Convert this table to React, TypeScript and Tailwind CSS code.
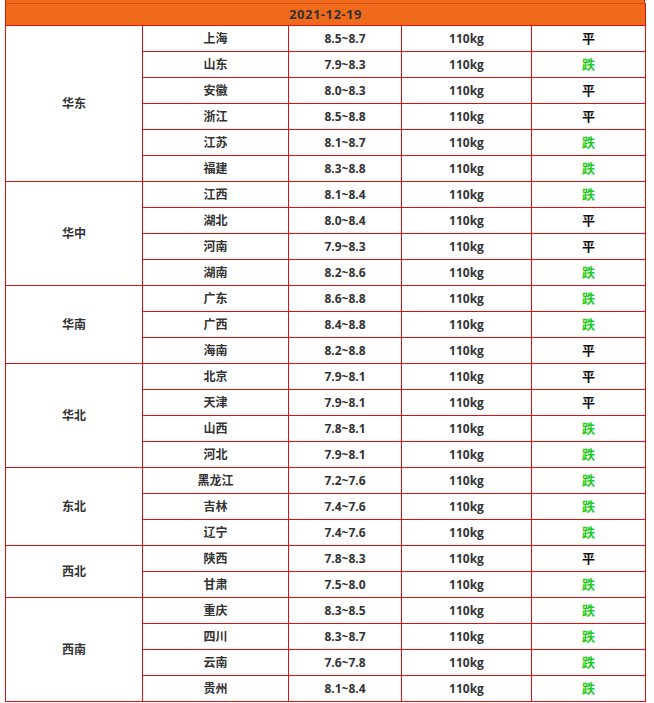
import React from "react";

type Row = { p: string; r: string; t: "平" | "跌" };
const groups: { name: string; rows: Row[] }[] = [
  { name: "华东", rows: [
    { p: "上海", r: "8.5~8.7", t: "平" },
    { p: "山东", r: "7.9~8.3", t: "跌" },
    { p: "安徽", r: "8.0~8.3", t: "平" },
    { p: "浙江", r: "8.5~8.8", t: "平" },
    { p: "江苏", r: "8.1~8.7", t: "跌" },
    { p: "福建", r: "8.3~8.8", t: "跌" },
  ] },
  { name: "华中", rows: [
    { p: "江西", r: "8.1~8.4", t: "跌" },
    { p: "湖北", r: "8.0~8.4", t: "平" },
    { p: "河南", r: "7.9~8.3", t: "平" },
    { p: "湖南", r: "8.2~8.6", t: "跌" },
  ] },
  { name: "华南", rows: [
    { p: "广东", r: "8.6~8.8", t: "跌" },
    { p: "广西", r: "8.4~8.8", t: "跌" },
    { p: "海南", r: "8.2~8.8", t: "平" },
  ] },
  { name: "华北", rows: [
    { p: "北京", r: "7.9~8.1", t: "平" },
    { p: "天津", r: "7.9~8.1", t: "平" },
    { p: "山西", r: "7.8~8.1", t: "跌" },
    { p: "河北", r: "7.9~8.1", t: "跌" },
  ] },
  { name: "东北", rows: [
    { p: "黑龙江", r: "7.2~7.6", t: "跌" },
    { p: "吉林", r: "7.4~7.6", t: "跌" },
    { p: "辽宁", r: "7.4~7.6", t: "跌" },
  ] },
  { name: "西北", rows: [
    { p: "陕西", r: "7.8~8.3", t: "平" },
    { p: "甘肃", r: "7.5~8.0", t: "跌" },
  ] },
  { name: "西南", rows: [
    { p: "重庆", r: "8.3~8.5", t: "跌" },
    { p: "四川", r: "8.3~8.7", t: "跌" },
    { p: "云南", r: "7.6~7.8", t: "跌" },
    { p: "贵州", r: "8.1~8.4", t: "跌" },
  ] },
];

const cell = "border border-[#e01010] h-[26px] p-0 text-center align-middle";

export default function App() {
  return (
    <div
      className="bg-white w-[654px] h-[703px] overflow-hidden pl-[5px]"
      style={{ fontFamily: '"Open Sans", "Noto Sans CJK SC", sans-serif' }}
    >
      <div className="w-[640px] h-[3px] bg-[#f06a1c] border-r border-l border-[#c0302a]" />
      <table className="table-fixed border-collapse w-[640px] text-[12px] font-bold text-[#333]">
        <colgroup>
          <col className="w-[137px]" />
          <col className="w-[146px]" />
          <col className="w-[113px]" />
          <col className="w-[130px]" />
          <col className="w-[114px]" />
        </colgroup>
        <thead>
          <tr>
            <th
              colSpan={5}
              className="h-[22px] bg-[#f06a1c] border border-[#e01010] border-t-[#d84a14] p-0 text-center align-middle text-[13px] font-bold text-[#333] tracking-[0.5px]"
            >
              2021-12-19
            </th>
          </tr>
        </thead>
        <tbody>
          {groups.map((g) =>
            g.rows.map((r, i) => (
              <tr key={g.name + r.p}>
                {i === 0 && (
                  <td rowSpan={g.rows.length} className={cell}>
                    {g.name}
                  </td>
                )}
                <td className={cell}>{r.p}</td>
                <td className={cell}>{r.r}</td>
                <td className={cell}>110kg</td>
                <td className={cell}>
                  <span className={r.t === "跌" ? "text-[#22cc22] text-[13px]" : "text-[#111] text-[13px]"}>{r.t}</span>
                </td>
              </tr>
            ))
          )}
        </tbody>
      </table>
    </div>
  );
}
